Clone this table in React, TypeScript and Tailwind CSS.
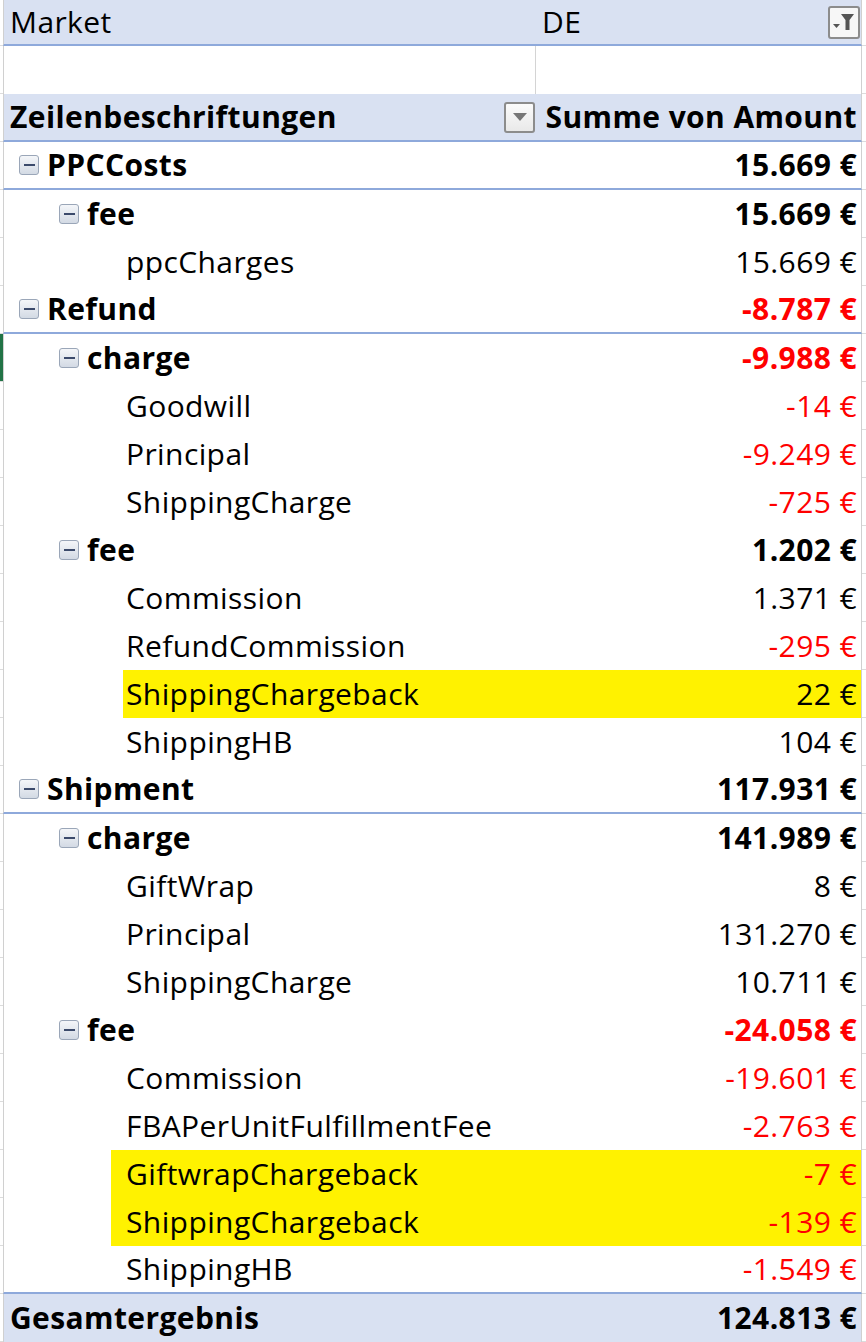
import React from "react";

type Row = {
  label: string;
  value: string;
  level: 0 | 1 | 2;
  bold?: boolean;
  red?: boolean;
  yellow?: "a" | "b";
  line?: boolean;
  green?: boolean;
};

const rows: Row[] = [
  { label: "PPCCosts", value: "15.669 €", level: 0, bold: true, line: true },
  { label: "fee", value: "15.669 €", level: 1, bold: true },
  { label: "ppcCharges", value: "15.669 €", level: 2 },
  { label: "Refund", value: "-8.787 €", level: 0, bold: true, red: true, line: true },
  { label: "charge", value: "-9.988 €", level: 1, bold: true, red: true, green: true },
  { label: "Goodwill", value: "-14 €", level: 2, red: true },
  { label: "Principal", value: "-9.249 €", level: 2, red: true },
  { label: "ShippingCharge", value: "-725 €", level: 2, red: true },
  { label: "fee", value: "1.202 €", level: 1, bold: true },
  { label: "Commission", value: "1.371 €", level: 2 },
  { label: "RefundCommission", value: "-295 €", level: 2, red: true },
  { label: "ShippingChargeback", value: "22 €", level: 2, yellow: "a" },
  { label: "ShippingHB", value: "104 €", level: 2 },
  { label: "Shipment", value: "117.931 €", level: 0, bold: true, line: true },
  { label: "charge", value: "141.989 €", level: 1, bold: true },
  { label: "GiftWrap", value: "8 €", level: 2 },
  { label: "Principal", value: "131.270 €", level: 2 },
  { label: "ShippingCharge", value: "10.711 €", level: 2 },
  { label: "fee", value: "-24.058 €", level: 1, bold: true, red: true },
  { label: "Commission", value: "-19.601 €", level: 2, red: true },
  { label: "FBAPerUnitFulfillmentFee", value: "-2.763 €", level: 2, red: true },
  { label: "GiftwrapChargeback", value: "-7 €", level: 2, red: true, yellow: "b" },
  { label: "ShippingChargeback", value: "-139 €", level: 2, red: true, yellow: "b" },
  { label: "ShippingHB", value: "-1.549 €", level: 2, red: true, line: true },
];

function MinusBox() {
  return (
    <span className="mr-[8px] flex h-[20px] w-[20px] shrink-0 items-center justify-center rounded-[3px] border border-[#9aa6b8] bg-gradient-to-b from-[#f4f6f9] to-[#d3dae4]">
      <span className="h-[2px] w-[11px] bg-[#3b4a6b]" />
    </span>
  );
}

function FilterButton() {
  return (
    <span className="flex h-[33px] w-[32px] items-center justify-center rounded-[3px] border-2 border-[#8c8c8c] bg-[#f7f7f7]">
      <svg width="26" height="26" viewBox="0 0 26 26">
        <path d="M2 15 L9 15 L5.5 19 Z" fill="#555" />
        <path d="M10 5 L23 5 L18.5 11 L18.5 21 L14.5 21 L14.5 11 Z" fill="#555" />
      </svg>
    </span>
  );
}

function DropButton() {
  return (
    <span className="flex h-[31px] w-[31px] items-center justify-center rounded-[3px] border-2 border-[#8c8c8c] bg-gradient-to-b from-[#fbfbfb] to-[#e9e9e9]">
      <svg width="16" height="12" viewBox="0 0 16 12">
        <path d="M1 2 L15 2 L8 10 Z" fill="#777" />
      </svg>
    </span>
  );
}

function Stub({ green, h }: { green?: boolean; h: string }) {
  return (
    <div
      className={`${h} w-[3px] shrink-0 border-b border-[#dcdcdc] ${green ? "bg-[#217346]" : "bg-white"}`}
    />
  );
}

function RightStub({ h }: { h: string }) {
  return <div className={`${h} w-[4px] shrink-0 border-b border-[#dcdcdc] bg-white`} />;
}

export default function App() {
  return (
    <div
      className="flex w-[866px] flex-col bg-white text-[30px] leading-none tracking-[0.4px] text-black"
      style={{ fontFamily: "'Open Sans', 'Liberation Sans', sans-serif" }}
    >
      {/* Market row */}
      <div className="flex">
        <Stub h="h-[46px]" />
        <div className="flex h-[46px] w-[859px] items-center border-x border-b-2 border-x-[#d0d0d0] border-b-[#8ea9db] bg-[#d9e1f2]">
          <div className="w-[532px] pl-[6px]">Market</div>
          <div className="flex flex-1 items-center justify-between pl-[6px] pr-[1px]">
            <span>DE</span>
            <FilterButton />
          </div>
        </div>
        <RightStub h="h-[46px]" />
      </div>
      {/* Empty row */}
      <div className="flex">
        <Stub h="h-[48px]" />
        <div className="flex h-[48px] w-[859px] border-x border-[#d0d0d0]">
          <div className="w-[532px] border-r border-[#d4d4d4]" />
          <div className="flex-1" />
        </div>
        <RightStub h="h-[48px]" />
      </div>
      {/* Header row */}
      <div className="flex">
        <Stub h="h-[48px]" />
        <div className="flex h-[48px] w-[859px] items-center border-x border-b-2 border-x-[#d0d0d0] border-b-[#8ea9db] bg-[#d9e1f2] font-bold">
          <div className="flex w-[532px] items-center justify-between pl-[6px] pr-[1px]">
            <span>Zeilenbeschriftungen</span>
            <DropButton />
          </div>
          <div className="flex-1 pr-[4px] text-right">Summe von Amount</div>
        </div>
        <RightStub h="h-[48px]" />
      </div>
      {/* Data rows */}
      {rows.map((r, i) => {
        const indent = r.level === 0 ? "pl-[15px]" : r.level === 1 ? "pl-[55px]" : "pl-[122px]";
        return (
          <div className="flex" key={i}>
            <Stub h="h-[48px]" green={r.green} />
            <div
              className={`flex h-[48px] w-[859px] border-x border-x-[#d0d0d0] ${r.line ? "border-b-2 border-b-[#8ea9db]" : ""} ${r.bold ? "font-bold" : ""}`}
            >
              <div
                className={`flex flex-1 items-center ${r.yellow === "a" ? "ml-[119px] bg-[#fff200]" : r.yellow === "b" ? "ml-[107px] bg-[#fff200]" : ""}`}
              >
                <div
                  className={`flex w-[532px] shrink-0 items-center ${r.yellow === "a" ? "-ml-[119px]" : r.yellow === "b" ? "-ml-[107px]" : ""} ${indent}`}
                >
                  {r.level < 2 && <MinusBox />}
                  <span>{r.label}</span>
                </div>
                <div className={`flex-1 pr-[4px] text-right ${r.red ? "text-[#ff0000]" : ""}`}>
                  {r.value}
                </div>
              </div>
            </div>
            <RightStub h="h-[48px]" />
          </div>
        );
      })}
      {/* Total */}
      <div className="flex">
        <Stub h="h-[48px]" />
        <div className="flex h-[48px] w-[859px] items-center border-x border-x-[#d0d0d0] bg-[#d9e1f2] font-bold">
          <div className="w-[532px] pl-[6px]">Gesamtergebnis</div>
          <div className="flex-1 pr-[4px] text-right">124.813 €</div>
        </div>
        <RightStub h="h-[48px]" />
      </div>
    </div>
  );
}
